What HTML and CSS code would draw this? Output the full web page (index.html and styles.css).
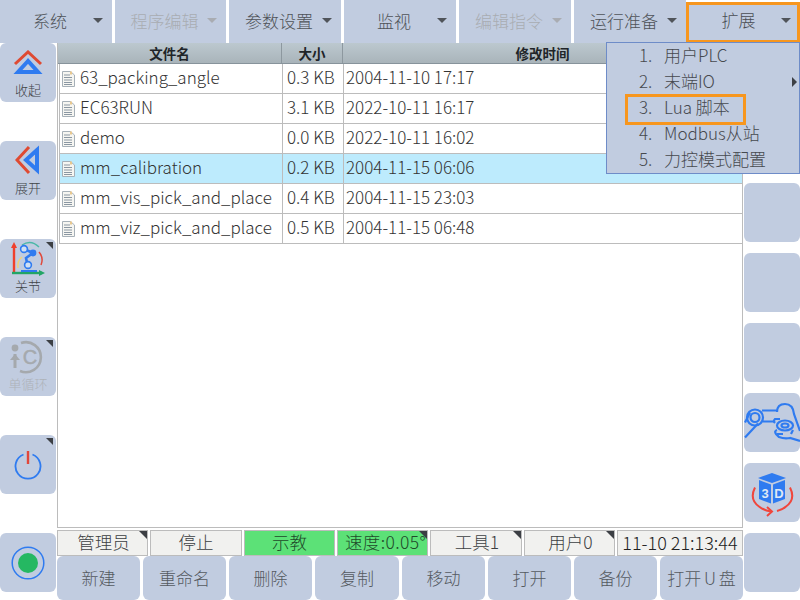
FILE: index.html
```html
<!DOCTYPE html>
<html lang="zh-CN">
<head>
<meta charset="utf-8">
<title>文件管理</title>
<link rel="stylesheet" href="styles.css">
</head>
<body>
<div class="app">
  <nav class="topbar">
    <div class="tab"><span class="tab-label">系统</span><i class="caret"></i></div>
    <div class="tab off"><span class="tab-label">程序编辑</span><i class="caret"></i></div>
    <div class="tab"><span class="tab-label">参数设置</span><i class="caret"></i></div>
    <div class="tab"><span class="tab-label">监视</span><i class="caret"></i></div>
    <div class="tab off"><span class="tab-label">编辑指令</span><i class="caret"></i></div>
    <div class="tab"><span class="tab-label">运行准备</span><i class="caret"></i></div>
    <div class="tab active"><span class="tab-label">扩展</span><i class="caret"></i></div>
  </nav>

  <aside class="side left">
    <div class="tool labeled">
      <svg class="ico gap5" width="30" height="26" viewBox="0 0 30 26"><path d="M2 14 15 2l13 12" fill="none" stroke="#df4a32" stroke-width="3"/><path d="M15 11 5 22h20z" fill="none" stroke="#2f7bf0" stroke-width="4"/></svg>
      <span class="tool-text">收起</span>
    </div>
    <div class="tool labeled">
      <svg class="ico gap4" width="26" height="30" viewBox="0 0 26 30"><path d="M14 2 2 15l12 13" fill="none" stroke="#df4a32" stroke-width="3"/><path d="M22 5 11 15l11 10z" fill="none" stroke="#2f7bf0" stroke-width="4"/></svg>
      <span class="tool-text">展开</span>
    </div>
    <div class="tool labeled flag">
      <svg class="ico" width="34" height="36" viewBox="0 0 34 36">
        <path d="M3 33V4" stroke="#f0402c" stroke-width="2.4"/><path d="M0 7 3 1l3 6z" fill="#f0402c"/>
        <path d="M1 32h30" stroke="#22a566" stroke-width="2.4"/><path d="M28 29l6 3-6 3z" fill="#22a566"/>
        <path d="M11 4q9-6 17 2" fill="none" stroke="#4cb8a8" stroke-width="1.5"/>
        <path d="M28 11q5 6 2 13" fill="none" stroke="#e0483a" stroke-width="1.5"/>
        <path d="M11 16q-5 4-4 11" fill="none" stroke="#f0d27a" stroke-width="1.5"/>
        <path d="M17 26 15 17l7-5-9-4" fill="none" stroke="#2f7bf0" stroke-width="2.6"/>
        <circle cx="13" cy="8" r="3.4" fill="#cfe0f5" stroke="#2f7bf0" stroke-width="1.6"/>
        <circle cx="22" cy="12" r="3.4" fill="#2f7bf0"/>
        <circle cx="17" cy="24" r="3.4" fill="#cfe0f5" stroke="#2f7bf0" stroke-width="1.6"/>
        <path d="M10 29h16v2H10z" fill="#2f7bf0"/>
      </svg>
      <span class="tool-text">关节</span>
    </div>
    <div class="tool labeled flag">
      <svg class="ico" width="36" height="36" viewBox="0 0 36 36">
        <path d="M11 4a15 15 0 1 1-1 28" fill="none" stroke="#a5a9ad" stroke-width="2.6"/>
        <circle cx="5" cy="9" r="3.4" fill="#a5a9ad"/>
        <path d="M5 15v14" stroke="#a5a9ad" stroke-width="3"/><path d="M0 21l5-6 5 6z" fill="#a5a9ad"/>
        <text class="ico-c" x="20" y="25" text-anchor="middle">C</text>
      </svg>
      <span class="tool-text dim">单循环</span>
    </div>
    <div class="tool flag">
      <svg class="ico" width="28" height="30" viewBox="0 0 28 30"><path d="M9.500 4.500a12.500 12.500 0 1 0 9 0" fill="none" stroke="#2f7bf0" stroke-width="1.8"/><path d="M14 1v13" stroke="#e2463a" stroke-width="2.400"/></svg>
    </div>
    <div class="tool">
      <svg class="ico" width="34" height="34" viewBox="0 0 34 34"><circle cx="17" cy="17" r="15.800" fill="none" stroke="#2f7bf0" stroke-width="1.500"/><circle cx="17" cy="17" r="10" fill="#25b862"/></svg>
    </div>
  </aside>

  <main class="center">
    <section class="table">
      <div class="row head"><div class="c name">文件名</div><div class="c size">大小</div><div class="c time">修改时间</div></div>
      <div class="row"><div class="c name"><svg class="file"><use href="#doc"/></svg>63_packing_angle</div><div class="c size">0.3 KB</div><div class="c time">2004-11-10 17:17</div></div>
      <div class="row"><div class="c name"><svg class="file"><use href="#doc"/></svg>EC63RUN</div><div class="c size">3.1 KB</div><div class="c time">2022-10-11 16:17</div></div>
      <div class="row"><div class="c name"><svg class="file"><use href="#doc"/></svg>demo</div><div class="c size">0.0 KB</div><div class="c time">2022-10-11 16:02</div></div>
      <div class="row sel"><div class="c name"><svg class="file"><use href="#doc"/></svg>mm_calibration</div><div class="c size">0.2 KB</div><div class="c time">2004-11-15 06:06</div></div>
      <div class="row"><div class="c name"><svg class="file"><use href="#doc"/></svg>mm_vis_pick_and_place</div><div class="c size">0.4 KB</div><div class="c time">2004-11-15 23:03</div></div>
      <div class="row"><div class="c name"><svg class="file"><use href="#doc"/></svg>mm_viz_pick_and_place</div><div class="c size">0.5 KB</div><div class="c time">2004-11-15 06:48</div></div>
    </section>
    <div class="status">
      <div class="st flag-sm">管理员</div>
      <div class="st">停止</div>
      <div class="st green">示教</div>
      <div class="st green speed flag-sm">速度:0.05°</div>
      <div class="st flag-sm">工具1</div>
      <div class="st flag-sm">用户0</div>
      <div class="st clock">11-10 21:13:44</div>
    </div>
    <div class="actions">
      <div class="act">新建</div><div class="act">重命名</div><div class="act">删除</div><div class="act">复制</div>
      <div class="act">移动</div><div class="act">打开</div><div class="act">备份</div><div class="act tight">打开 U 盘</div>
    </div>
  </main>

  <aside class="side right">
    <div class="tool"></div>
    <div class="tool"></div>
    <div class="tool"></div>
    <div class="tool"></div>
    <div class="tool"></div>
    <div class="tool">
      <svg width="56" height="50" viewBox="0 0 56 50"><g fill="none" stroke="#2f7bf0" stroke-width="2.200">
        <circle cx="11" cy="19.500" r="8"/><circle cx="11" cy="19.500" r="4.500"/>
        <path d="M18 12.500h16M19 23.500h12M1 24.500 6 14.500M1 39.500 14 25.500"/>
        <path d="M33 14q0-8 8-8 8 0 9 10l6 17"/>
        <ellipse cx="41" cy="27.500" rx="8" ry="5"/><ellipse cx="41" cy="27.500" rx="3.500" ry="2"/>
        <path d="M36 21h-5q-2 2 0 4M33 32q-3 1-1 4l3 3q5 2 11 1l10 3M33 36h6M49 32l-2 4"/>
      </g></svg>
    </div>
    <div class="tool">
      <svg width="48" height="48" viewBox="0 0 48 48">
        <path d="M24 4 38 9 24 14 10 9z" fill="#2f7bf0"/>
        <path d="M11 11l12 4.500v19L11 30z" fill="#2f7bf0"/>
        <path d="M25 15.500 37 11v19l-12 4.500z" fill="#2f7bf0"/>
        <text class="ico-3d" x="17" y="29" text-anchor="middle">3</text>
        <text class="ico-3d" x="31" y="29" text-anchor="middle">D</text>
        <path d="M7 18.500q-6 12 4 19 5 4 12 5" fill="none" stroke="#f0463c" stroke-width="2"/>
        <path d="M19 38l5 4.500-5 4.500" fill="none" stroke="#f0463c" stroke-width="2"/>
        <path d="M42 18.500q6 12-4 19-3 3-9 4.500" fill="none" stroke="#f0463c" stroke-width="2"/>
      </svg>
    </div>
    <div class="tool"></div>
  </aside>

  <div class="menu">
    <div class="mi"><span class="num">1.</span>用户PLC</div>
    <div class="mi"><span class="num">2.</span>末端IO<i class="sub"></i></div>
    <div class="mi"><span class="num">3.</span>Lua 脚本<b class="focus"></b></div>
    <div class="mi"><span class="num">4.</span>Modbus从站</div>
    <div class="mi"><span class="num">5.</span>力控模式配置</div>
  </div>
</div>
<svg class="defs" width="0" height="0">
  <symbol id="doc" viewBox="0 0 14 16">
    <path d="M1.500.5h8l4 3.500v11.500h-12z" fill="#f6f6f2" stroke="#a6b0b8"/>
    <path d="M3 4h6M3 6.500h8M3 9h8M3 11.500h8M3 13.500h8" stroke="#8a96a2"/>
    <path d="M9 .5h2v3H9z" fill="#e8c890"/>
  </symbol>
</svg>
</body>
</html>
```

FILE: styles.css
```css
* { box-sizing: border-box; }
html, body { margin: 0; padding: 0; background: #fff; }
body { width: 800px; height: 600px; overflow: hidden; font-family: "Noto Sans CJK SC", "Noto Sans", sans-serif; font-weight: 300; }
.defs { position: absolute; }

.app { position: relative; width: 800px; height: 600px; display: grid; grid-template-columns: 57px 687px 56px; grid-template-rows: 43px 557px; }

.topbar { grid-column: 1 / 4; display: grid; grid-template-columns: 112px 111px 112px 112px 112px 112px 111px; column-gap: 3px; height: 42px; }
.tab { position: relative; background: #c1cce0; display: flex; align-items: center; justify-content: center; padding: 0 12px 3px 0; color: #4f5358; font-size: 17px; }
.tab.off { color: #a9acb2; }
.tab .caret { position: absolute; right: 9px; top: 18px; width: 0; height: 0; border: 5px solid transparent; border-bottom: 0; border-top: 5px solid #50545a; }
.tab.off .caret { border-top-color: #a9acb2; }
.tab.active { border: 3px solid #f7961e; color: #4a4e54; height: 41px; margin: 2px 0 0 -3px; padding: 0 9px 7px 0; }
.tab.active .caret { right: 6px; top: 13px; }

.side { display: flex; flex-direction: column; }
.side.left { gap: 39px; width: 56px; }
.side.right { gap: 11px; }
.tool { position: relative; flex: none; width: 56px; height: 59px; background: #c1cce0; border-radius: 6px; display: flex; flex-direction: column; align-items: center; justify-content: center; }
.tool.labeled { justify-content: flex-end; padding-bottom: 4px; }
.tool .ico { flex: none; }
.tool .gap5 { margin-bottom: 5px; }
.tool .gap4 { margin-bottom: 4px; }
.tool-text { font-size: 13px; line-height: 17px; color: #3f4347; }
.tool-text.dim { color: #aeb2b8; }
.flag::after, .flag-sm::after { content: ""; position: absolute; right: 3px; top: 3px; border-style: solid; border-width: 0 7px 7px 0; border-color: transparent #3c3f44 transparent transparent; }
.flag-sm::after { right: 0; top: 0; border-width: 0 8px 8px 0; }
.ico-c { font: 400 20px "Liberation Sans", sans-serif; fill: #a5a9ad; stroke: #a5a9ad; stroke-width: .5px; }
.ico-3d { font: 700 13px "Liberation Sans", sans-serif; fill: #dfe8f5; }

.center { display: flex; flex-direction: column; width: 686px; }
.table { height: 485px; border: 1px solid #bcbcbc; border-top: 0; flex: none; padding-left: 1px; }
.row { display: grid; grid-template-columns: 223px 61px 1fr; height: 30px; border-bottom: 1px solid #bcbcbc; border-left: 1px solid #bcbcbc; color: #333; font-size: 17px; }
.row .c { display: flex; align-items: center; padding: 0 0 3px 4px; border-right: 1px solid #bcbcbc; line-height: 26px; white-space: nowrap; }
.row .name { padding-left: 1px; }
.row .time { border-right: 0; padding-left: 2px; }
.row .file { width: 14px; height: 16px; margin: 3px 5px 0 0; flex: none; }
.row.sel { background: #bdebfd; }
.row.head { height: 21px; margin-left: -1px; border-left: 0; border-bottom: 1px solid #87939b; background: linear-gradient(#bcc8cf, #a9b4ba); color: #202428; font-size: 13.500px; font-weight: 700; grid-template-columns: 224px 61px 1fr; }
.row.head .c { justify-content: center; line-height: 20px; padding: 0; border-right-color: #8d989f; }
.row.head .time { border-right: 0; padding-left: 0; }

.status { display: grid; grid-template-columns: 91px 92px 91px 91px 92px 91px 126px; column-gap: 2px; height: 25px; margin-top: 2px; }
.st { position: relative; background: #f1f1ef; border: 1px solid #bcbcbc; color: #3c3f42; font-size: 17.500px; display: flex; align-items: center; justify-content: center; line-height: 22px; padding-bottom: 2px; white-space: nowrap; }
.st.flag-sm { padding-left: 2px; }
.st.green { background: #5ce177; color: #214a2a; }
.st.speed { letter-spacing: .4px; padding-left: 6px; }
.st.clock { color: #222; font-size: 18px; }

.actions { display: grid; grid-template-columns: 83px 83px 83px 84px 83px 83px 83px 83px; column-gap: 3px; height: 44px; margin-top: 1px; }
.act { background: #c1cce0; border-radius: 6px; color: #555a60; font-size: 17px; display: flex; align-items: center; justify-content: center; padding-bottom: 2px; white-space: nowrap; }
.act.tight { word-spacing: -1px; }

.menu { position: absolute; left: 606px; top: 42px; width: 194px; height: 132px; background: #c1cce0; border: 1px solid #6e8cc8; padding: 0 0 0 32px; color: #46494e; font-size: 17px; }
.mi { position: relative; height: 26px; display: flex; align-items: center; line-height: 24px; padding-bottom: 2px; white-space: nowrap; }
.num { width: 25px; flex: none; }
.mi .sub { position: absolute; right: 2px; top: 8px; border-style: solid; border-width: 5px 0 5px 5px; border-color: transparent transparent transparent #3c3f44; }
.mi .focus { position: absolute; left: -14px; top: -1px; width: 121px; height: 31px; border: 3px solid #f7961e; }
```
